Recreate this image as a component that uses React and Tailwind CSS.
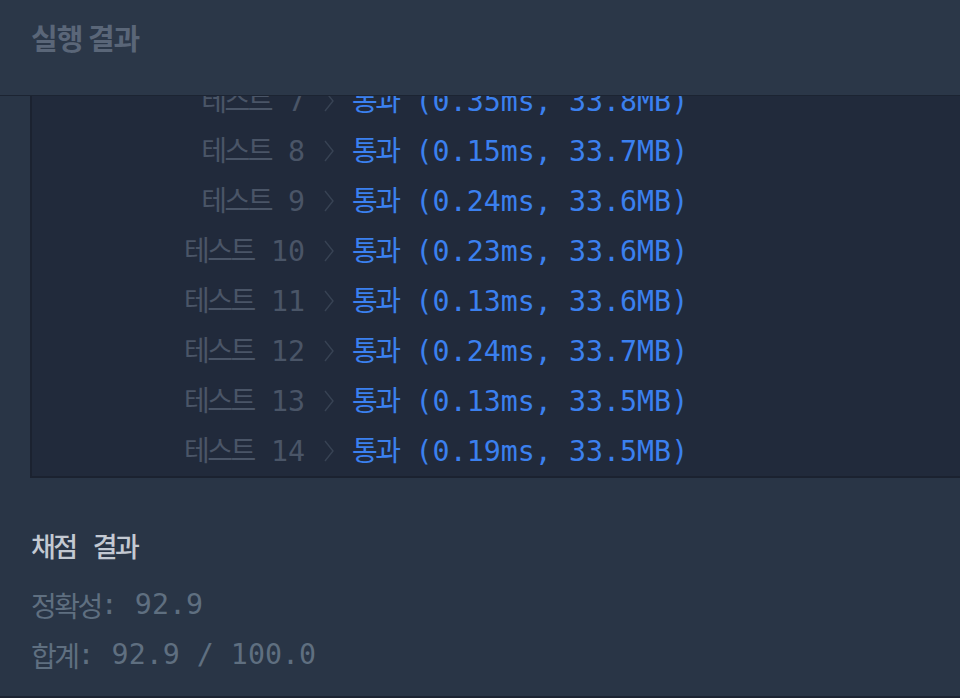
import React, { useEffect, useRef } from 'react';

const results = [
  { n: 7, time: '0.35ms', mem: '33.8MB' },
  { n: 8, time: '0.15ms', mem: '33.7MB' },
  { n: 9, time: '0.24ms', mem: '33.6MB' },
  { n: 10, time: '0.23ms', mem: '33.6MB' },
  { n: 11, time: '0.13ms', mem: '33.6MB' },
  { n: 12, time: '0.24ms', mem: '33.7MB' },
  { n: 13, time: '0.13ms', mem: '33.5MB' },
  { n: 14, time: '0.19ms', mem: '33.5MB' },
];

const mono = "font-['DejaVu_Sans_Mono','Liberation_Mono',monospace] text-[28.3px]";

const Ko = ({ children }) => (
  <span className="font-['Noto_Sans_CJK_KR',sans-serif] text-[28px] tracking-[-2.5px]">{children}</span>
);

const Chevron = () => (
  <svg width="12" height="22" viewBox="0 0 12 22" fill="none" className="shrink-0">
    <polyline points="2,1 10,11 2,21" stroke="#384354" strokeWidth="1.4" />
  </svg>
);

const Row = ({ r }) => (
  <div className={`flex items-center h-[50px] whitespace-pre ${mono}`}>
    <div className="w-[273px] text-right text-[#4a5567]">
      <Ko>테스트</Ko> {r.n}
    </div>
    <div className="w-[47px] flex justify-center">
      <Chevron />
    </div>
    <div className="text-[#3b80ef]">
      <Ko>통과</Ko> ({r.time}, {r.mem})
    </div>
  </div>
);

export default function App() {
  const boxRef = useRef(null);

  useEffect(() => {
    // list is scrolled a little, so test 7 sits under the header
    if (boxRef.current) boxRef.current.scrollTop = 20;
  }, []);

  return (
    <div className="w-[960px] h-[698px] bg-[#293546] flex flex-col overflow-hidden">
      <div className="h-[96px] shrink-0 bg-[#2b3748] border-b border-[#1c2432] flex items-center px-[31px] pb-[20px]">
        <h2 className="font-['Noto_Sans_CJK_KR',sans-serif] font-bold text-[29px] tracking-[-1px] text-[#5a6678]">
          실행 결과
        </h2>
      </div>

      <div
        ref={boxRef}
        className="ml-[30px] h-[382px] shrink-0 overflow-hidden bg-[#212a3b] border-l-2 border-b-2 border-[#1b2230]"
      >
        {results.map((r) => (
          <Row key={r.n} r={r} />
        ))}
      </div>

      <div className="flex-1 px-[31px] pt-[48px] border-b-2 border-[#1c2432] whitespace-pre">
        <div className="h-[40px] leading-[40px] text-[#c3c9d2] font-medium">
          <span className="font-['Noto_Sans_CJK_KR',sans-serif] text-[27px] tracking-[-2.5px]">채점</span>
          <span className={mono}> </span>
          <span className="font-['Noto_Sans_CJK_KR',sans-serif] text-[27px] tracking-[-2.5px]">결과</span>
        </div>
        <div className={`mt-[19px] h-[40px] flex items-center text-[#5f6f80] ${mono}`}>
          <Ko>정확성</Ko>: 92.9
        </div>
        <div className={`mt-[10px] h-[40px] flex items-center text-[#5f6f80] ${mono}`}>
          <Ko>합계</Ko>: 92.9 / 100.0
        </div>
      </div>
    </div>
  );
}
